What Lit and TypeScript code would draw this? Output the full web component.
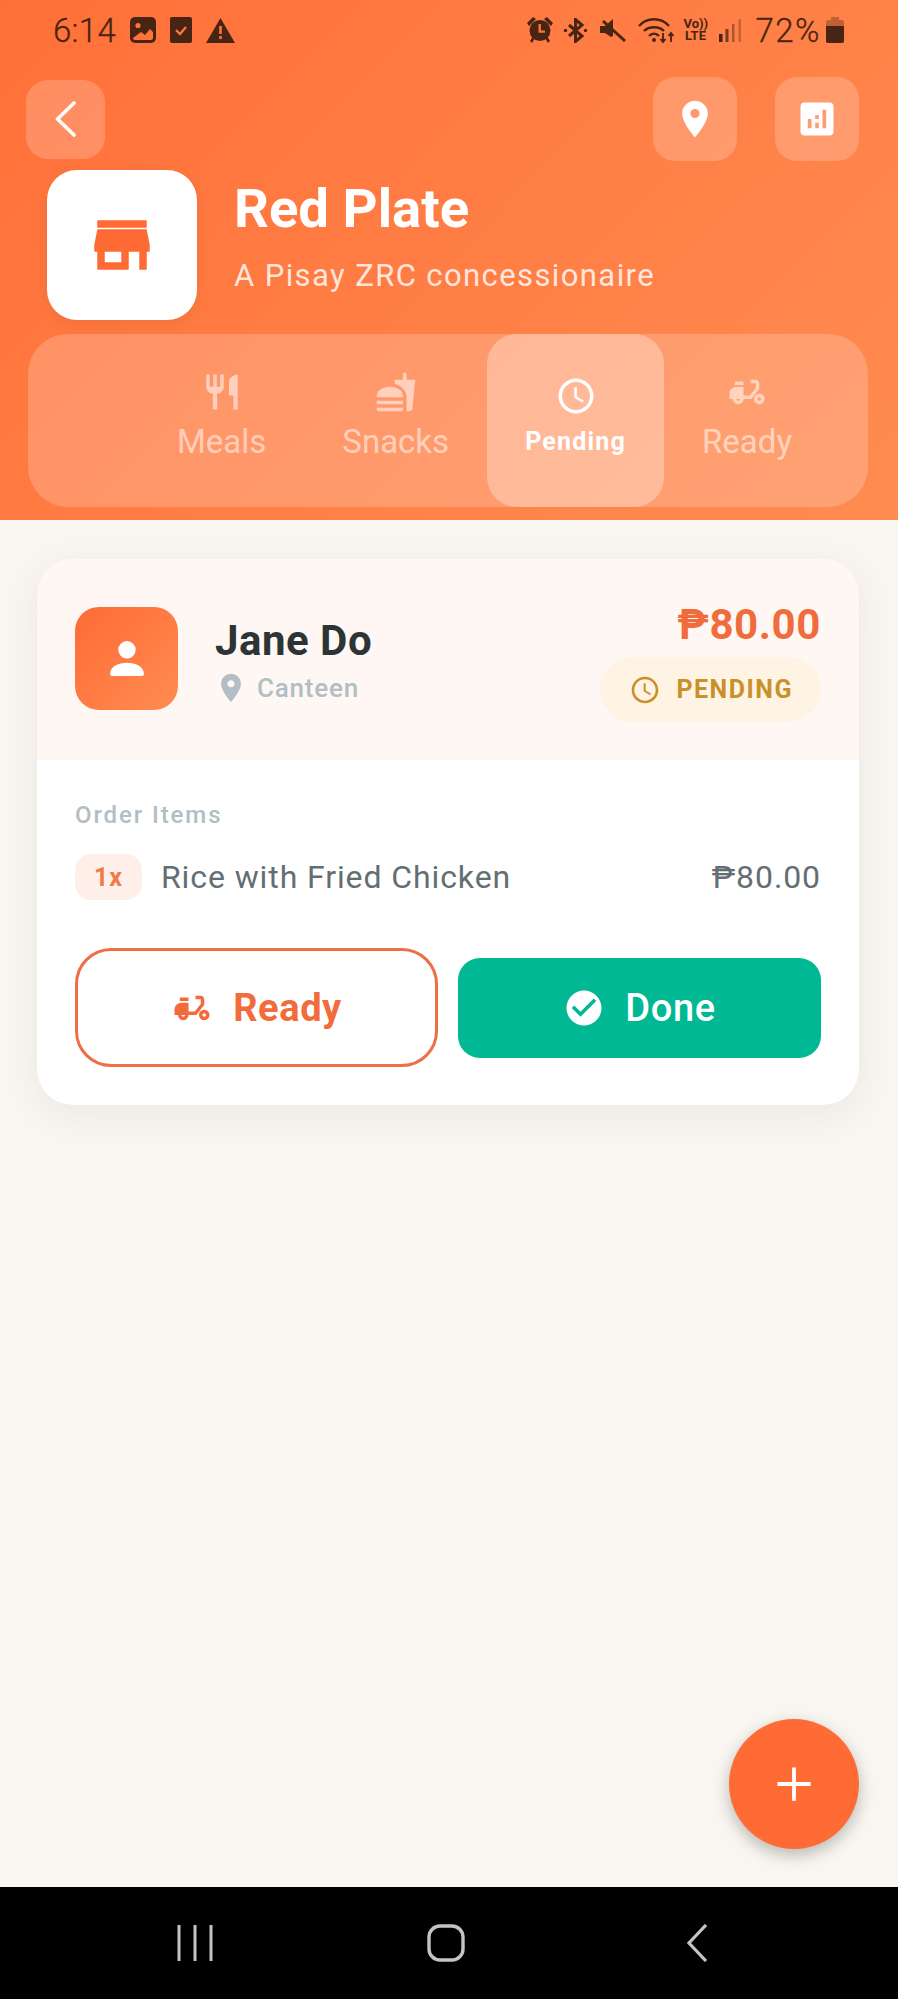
import { LitElement, css, html, svg } from "lit";
import { customElement } from "lit/decorators.js";

const P = {
  back: svg`<path d="M26 2 9.500 18 26 34" fill="none" stroke="currentColor" stroke-width="3.600" stroke-linecap="round" stroke-linejoin="round" transform="scale(.6667)"/>`,
  pin: svg`<path fill-rule="evenodd" d="M12 2C8.130 2 5 5.130 5 9c0 5.250 7 13 7 13s7-7.750 7-13c0-3.870-3.130-7-7-7zm0 9.500c-1.380 0-2.500-1.120-2.500-2.500s1.120-2.500 2.500-2.500 2.500 1.120 2.500 2.500-1.120 2.500-2.500 2.500z"/>`,
  chart: svg`<path d="M19 3H5c-1.100 0-2 .9-2 2v14c0 1.100.9 2 2 2h14c1.100 0 2-.9 2-2V5c0-1.100-.9-2-2-2zM9 17H7v-5h2v5zm4 0h-2v-3h2v3zm0-5h-2v-2h2v2zm4 5h-2V7h2v10z"/>`,
  store: svg`<path d="M20 4H4v2h16V4zm1 10v-2l-1-5H4l-1 5v2h1v6h10v-6h4v6h2v-6h1zm-9 4H6v-4h6v4z" stroke="currentColor" stroke-width=".5" stroke-linejoin="round"/>`,
  meals: svg`<path d="M11 9H9V2H7v7H5V2H3v7c0 2.120 1.660 3.840 3.750 3.970V22h2.500v-9.030C11.340 12.840 13 11.120 13 9V2h-2v7zm5-3v8h2.500v8H21V2c-2.760 0-5 2.240-5 4z"/>`,
  snacks: svg`<path d="M18.060 22.990h1.660c.84 0 1.530-.64 1.630-1.460L23 5.050h-5V1h-1.970v4.050h-4.970l.3 2.340c1.710.47 3.310 1.320 4.270 2.260 1.440 1.420 2.430 2.890 2.430 5.290v8.050zM1 21.990V21h15.030v.99c0 .55-.45 1-1.010 1H2.010c-.56 0-1.010-.45-1.010-1zm15.030-7c.5-4-3.750-6-7.500-6s-8 2-7.500 6h15zM1.020 17h15v2h-15z"/>`,
  clock: svg`<path d="M11.990 2C6.470 2 2 6.480 2 12s4.470 10 9.990 10C17.520 22 22 17.520 22 12S17.520 2 11.990 2zM12 20c-4.420 0-8-3.580-8-8s3.580-8 8-8 8 3.580 8 8-3.580 8-8 8z"/><path d="M12.500 7H11v6l4.800 2.900.7-1.200-4-2.400z"/>`,
  scooter: svg`<path d="M19 7c0-1.100-.9-2-2-2h-3v2h3v2.650L13.520 14H10V9H6c-2.210 0-4 1.790-4 4v3h2c0 1.660 1.340 3 3 3s3-1.340 3-3h4.480L19 10.350V7zM7 17c-.55 0-1-.45-1-1h2c0 .55-.45 1-1 1z"/><path d="M5 6h5v2H5z"/><path d="M19 13c-1.660 0-3 1.340-3 3s1.340 3 3 3 3-1.340 3-3-1.340-3-3-3zm0 4c-.55 0-1-.45-1-1s.45-1 1-1 1 .45 1 1-.45 1-1 1z"/>`,
  person: svg`<circle cx="12" cy="8.200" r="3.600"/><path d="M5 18.200c0-3.200 3.600-4.700 7-4.700s7 1.500 7 4.700c0 .5-.3.8-.8.8H5.800c-.5 0-.8-.3-.8-.8z"/>`,
  check: svg`<path d="M12 2C6.480 2 2 6.480 2 12s4.480 10 10 10 10-4.480 10-10S17.520 2 12 2zm-2 15l-5-5 1.410-1.410L10 14.170l7.590-7.590L19 8l-9 9z"/>`,
  plus: svg`<path d="M12 2.500v19M2.500 12h19" fill="none" stroke="currentColor" stroke-width="2.200"/>`,
};

const ic = (p: unknown, cls: string) =>
  html`<svg class=${cls} viewBox="0 0 24 24" fill="currentColor">${p}</svg>`;

const TABS = [
  { label: "Meals", icon: P.meals },
  { label: "Snacks", icon: P.snacks },
  { label: "Pending", icon: P.clock, active: true },
  { label: "Ready", icon: P.scooter },
];

@customElement("app-root")
export class AppRoot extends LitElement {
  static styles = css`
    :host {
      display: flex;
      flex-direction: column;
      position: relative;
      width: 898px;
      height: 1999px;
      overflow: hidden;
      background: #f9f6f1;
      font-family: Roboto, "Liberation Sans", sans-serif;
    }
    svg {
      display: block;
      flex: none;
    }

    .header {
      height: 520px;
      flex: none;
      box-sizing: border-box;
      background: linear-gradient(135deg, #ff7038, #ff8c52);
      display: flex;
      flex-direction: column;
    }

    .status {
      height: 60px;
      flex: none;
      display: flex;
      align-items: center;
      padding: 0 54px 0 53px;
      color: #472413;
    }
    .time,
    .pct {
      font-size: 33px;
      font-weight: 300;
      letter-spacing: 0.3px;
      -webkit-text-stroke: 0.3px #472413;
    }
    .pct {
      letter-spacing: 1.5px;
      margin-left: 13px;
    }
    .sleft {
      display: flex;
      align-items: center;
      margin-right: auto;
    }
    .sright {
      display: flex;
      align-items: center;
    }
    .sleft svg {
      margin-left: 14px;
    }
    .s-alarm,
    .s-mute,
    .s-signal,
    .s-wifi {
      margin-left: 12px;
    }
    .s-alarm {
      margin-left: 0;
    }
    .s-bt {
      margin-left: 10px;
    }
    .s-batt {
      margin-left: 5px;
    }
    .lte {
      width: 24px;
      margin-left: 8px;
      font-size: 13px;
      line-height: 12px;
      font-weight: 700;
      text-align: center;
    }

    .topbar {
      display: flex;
      align-items: center;
      height: 84px;
      margin-top: 17px;
      padding: 0 39px 0 26px;
      gap: 38px;
    }
    .iconbtn {
      width: 84px;
      height: 84px;
      border-radius: 22px;
      background: rgba(255, 255, 255, 0.2);
      display: flex;
      align-items: center;
      justify-content: center;
      color: #fff;
    }
    .iconbtn.back {
      width: 79px;
      height: 79px;
      margin-right: auto;
    }
    .i-back {
      width: 36px;
      height: 36px;
    }
    .i-top {
      width: 44px;
      height: 44px;
    }

    .brand {
      display: flex;
      align-items: flex-start;
      gap: 37px;
      margin: 9px 0 14px 47px;
    }
    .logo {
      width: 150px;
      height: 150px;
      border-radius: 30px;
      background: #fff;
      color: #ff6b35;
      display: flex;
      align-items: center;
      justify-content: center;
      box-shadow: 0 4px 16px rgba(0, 0, 0, 0.06);
    }
    .i-store {
      width: 72px;
      height: 72px;
    }
    .brand-text {
      margin-top: 7px;
    }
    .brand h1 {
      margin: 0 0 19px;
      font-size: 54.500px;
      line-height: 62px;
      font-weight: 700;
      color: #fff;
    }
    .brand p {
      margin: 0;
      font-size: 31px;
      line-height: 36px;
      letter-spacing: 1.4px;
      color: rgba(255, 255, 255, 0.82);
    }

    .tabs {
      margin: 0 30px 0 28px;
      height: 173px;
      border-radius: 40px;
      background: rgba(255, 255, 255, 0.2);
      display: flex;
      justify-content: flex-end;
      padding-right: 38px;
    }
    .tab {
      padding: 0 38px 10px;
      display: flex;
      flex-direction: column;
      align-items: center;
      justify-content: center;
      gap: 10px;
      font-size: 33px;
      line-height: 38px;
      color: rgba(255, 255, 255, 0.55);
    }
    .tab.on {
      background: rgba(255, 255, 255, 0.3);
      border-radius: 30px;
      color: #fff;
      font-size: 25px;
      line-height: 29px;
      font-weight: 700;
      letter-spacing: 1.200px;
    }
    .i-tab {
      width: 42px;
      height: 42px;
    }

    .content {
      flex: 1;
      padding: 39px 39px 0 37px;
    }
    .card {
      border-radius: 36px;
      background: #fff;
      overflow: hidden;
      box-shadow: 0 10px 40px rgba(0, 0, 0, 0.06);
    }
    .card-head {
      height: 201px;
      box-sizing: border-box;
      background: #fff7f3;
      display: flex;
      align-items: center;
      padding: 0 38px;
    }
    .avatar {
      width: 103px;
      height: 103px;
      border-radius: 24px;
      background: linear-gradient(135deg, #ff6b35, #ff8c52);
      color: #fff;
      display: flex;
      align-items: center;
      justify-content: center;
      margin: -2px 37px 0 0;
    }
    .i-person {
      width: 58px;
      height: 58px;
    }
    .who {
      flex: 1;
      margin-top: 2px;
    }
    .name {
      font-size: 42px;
      line-height: 48px;
      font-weight: 700;
      color: #2d3436;
      letter-spacing: 0.5px;
    }
    .place {
      display: flex;
      align-items: center;
      gap: 9px;
      margin-top: 6px;
      margin-left: -1px;
      font-size: 26px;
      line-height: 32px;
      font-weight: 500;
      letter-spacing: 0.8px;
      color: #b2bec3;
    }
    .i-pin {
      width: 34px;
      height: 34px;
    }
    .side {
      display: flex;
      flex-direction: column;
      align-items: flex-end;
      gap: 8px;
      margin-top: 4px;
    }
    .price {
      font-size: 42px;
      line-height: 48px;
      font-weight: 700;
      letter-spacing: 0.6px;
      color: #f26b3a;
    }
    .badge {
      height: 65px;
      box-sizing: border-box;
      border-radius: 33px;
      background: #fff3e3;
      color: #c8912a;
      display: flex;
      align-items: center;
      gap: 15px;
      padding: 0 28px 0 29px;
      font-size: 25px;
      font-weight: 700;
      letter-spacing: 1.500px;
    }
    .i-badge {
      width: 32px;
      height: 32px;
    }

    .card-body {
      padding: 41px 38px 38px;
    }
    .label {
      font-size: 24px;
      line-height: 28px;
      font-weight: 500;
      letter-spacing: 1.900px;
      color: #b2bec3;
    }
    .row {
      display: flex;
      align-items: center;
      margin-top: 25px;
      font-size: 32px;
      letter-spacing: 0.9px;
      color: #636e72;
    }
    .qty {
      width: 67px;
      height: 46px;
      border-radius: 16px;
      background: #ffefe9;
      color: #f07a4a;
      display: flex;
      align-items: center;
      justify-content: center;
      font-size: 25px;
      font-weight: 700;
      margin-right: 19px;
    }
    .row .item {
      flex: 1;
    }
    .actions {
      display: grid;
      grid-template-columns: 1fr 1fr;
      align-items: center;
      gap: 20px;
      margin-top: 48px;
    }
    .btn {
      display: flex;
      align-items: center;
      justify-content: center;
      gap: 20px;
      box-sizing: border-box;
      font-size: 38px;
      font-weight: 700;
      letter-spacing: 0.6px;
    }
    .btn.ready {
      height: 119px;
      border: 3.500px solid #ee6e45;
      border-radius: 36px;
      color: #f26b3a;
      background: #fff;
    }
    .btn.done {
      height: 100px;
      border-radius: 22px;
      background: #00b894;
      color: #fff;
      font-weight: 500;
    }
    .i-btn {
      width: 42px;
      height: 42px;
    }

    .fab {
      position: absolute;
      left: 729px;
      top: 1719px;
      width: 130px;
      height: 130px;
      border-radius: 50%;
      background: #ff6b35;
      color: #fff;
      display: flex;
      align-items: center;
      justify-content: center;
      box-shadow: 0 6px 16px rgba(0, 0, 0, 0.25);
    }
    .i-plus {
      width: 42px;
      height: 42px;
    }

    .nav {
      height: 112px;
      flex: none;
      box-sizing: border-box;
      background: #000;
      color: #c4c4c4;
      display: grid;
      grid-template-columns: repeat(3, 251px);
      padding-left: 69.5px;
      align-items: center;
      justify-items: center;
    }
    .nav .recent {
      width: 36px;
      height: 36px;
    }
    .nav .home {
      width: 38px;
      height: 38px;
    }
    .nav .prev {
      width: 24px;
      height: 38px;
    }
  `;

  private statusBar() {
    return html`<div class="status">
      <div class="sleft">
        <span class="time">6:14</span>
        <svg width="26" height="26" viewBox="0 0 26 26">
          <rect width="26" height="26" rx="5" fill="#472413" />
          <circle cx="8" cy="8.500" r="2.600" fill="#ff7339" />
          <path d="M3 21c0 1 1 2 2 2h16c1 0 2-1 2-2v-6l-3-3-5 6-4-3-8 6z" fill="#ff7339" />
        </svg>
        <svg width="22" height="26" viewBox="0 0 22 26">
          <path d="M2 0h18a2 2 0 0 1 2 2v22a2 2 0 0 1-2 2H2a2 2 0 0 1-2-2V2a2 2 0 0 1 2-2z" fill="#472413" />
          <path d="M6 13l4 4 6-7" fill="none" stroke="#ff7339" stroke-width="2.400" />
        </svg>
        <svg width="29" height="25" viewBox="0 0 29 25">
          <path d="M14.500 0 29 25H0z" fill="#472413" />
          <path d="M13.200 8h2.600v8h-2.600zM13.200 18h2.600v3h-2.600z" fill="#ff7339" />
        </svg>
      </div>
      <div class="sright">
        <svg class="s-alarm" width="26" height="26" viewBox="0 0 26 26" fill="#472413">
          <circle cx="13" cy="13.500" r="10.500" />
          <path d="M0 6l6-6 3 2-7 7zM26 6l-6-6-3 2 7 7zM3 24l3-5 2 2-3 5zM23 24l-3-5-2 2 3 5z" />
          <path d="M11.500 7h2.400v6.500h4.100v2.300h-6.500z" fill="#ff7339" />
        </svg>
        <svg class="s-bt" width="25" height="25" viewBox="0 0 25 25" fill="none" stroke="#472413" stroke-width="3">
          <path d="M6 7l13 11-6.500 5.500v-22L19 7 6 18" />
          <circle cx="2.500" cy="12.500" r="1.700" fill="#472413" stroke="none" />
          <circle cx="22.500" cy="12.500" r="1.700" fill="#472413" stroke="none" />
        </svg>
        <svg class="s-mute" width="26" height="25" viewBox="0 0 26 25">
          <path d="M0 8h5l8-7v17l-2 1-6-4H0z" fill="#472413" />
          <path d="M3 3l22 20" stroke="#472413" stroke-width="3" />
        </svg>
        <svg class="s-wifi" width="37" height="27" viewBox="0 0 37 27" fill="none" stroke="#472413" stroke-width="2.400">
          <path d="M1 9c8-9 22-9 30 0M6 14c5-5 15-5 20 0M11 19c3-3 7-3 10 0" />
          <circle cx="16" cy="23" r="2" fill="#472413" stroke="none" />
          <path d="M25 16v9M22.500 22l2.500 3 2.500-3M33 25v-9M30.500 19l2.500-3 2.500 3" stroke-width="1.800" />
        </svg>
        <div class="lte">Vo))<br />LTE</div>
        <svg class="s-signal" width="23" height="26" viewBox="0 0 23 26" fill="#472413">
          <rect y="17" width="3.500" height="8" />
          <rect x="6.500" y="12" width="3" height="13" opacity=".75" />
          <rect x="13" y="7" width="2.500" height="18" opacity=".45" />
          <rect x="19.500" y="2" width="2.500" height="23" opacity=".3" />
        </svg>
        <span class="pct">72%</span>
        <svg class="s-batt" width="18" height="26" viewBox="0 0 18 26">
          <path d="M5 0h8v3h3a2 2 0 0 1 2 2v19a2 2 0 0 1-2 2H2a2 2 0 0 1-2-2V5a2 2 0 0 1 2-2h3z" fill="#472413" opacity=".35" />
          <path d="M0 9h18v15a2 2 0 0 1-2 2H2a2 2 0 0 1-2-2z" fill="#472413" />
        </svg>
      </div>
    </div>`;
  }

  render() {
    return html`
      <div class="header">
        ${this.statusBar()}
        <div class="topbar">
          <div class="iconbtn back">${ic(P.back, "i-back")}</div>
          <div class="iconbtn">${ic(P.pin, "i-top")}</div>
          <div class="iconbtn">${ic(P.chart, "i-top")}</div>
        </div>
        <div class="brand">
          <div class="logo">${ic(P.store, "i-store")}</div>
          <div class="brand-text">
            <h1>Red Plate</h1>
            <p>A Pisay ZRC concessionaire</p>
          </div>
        </div>
        <div class="tabs">
          ${TABS.map(
            (t) => html`<div class="tab ${t.active ? "on" : ""}">
              ${ic(t.icon, "i-tab")}<span>${t.label}</span>
            </div>`,
          )}
        </div>
      </div>

      <div class="content">
        <div class="card">
          <div class="card-head">
            <div class="avatar">${ic(P.person, "i-person")}</div>
            <div class="who">
              <div class="name">Jane Do</div>
              <div class="place">${ic(P.pin, "i-pin")}<span>Canteen</span></div>
            </div>
            <div class="side">
              <div class="price">₱80.00</div>
              <div class="badge">${ic(P.clock, "i-badge")}<span>PENDING</span></div>
            </div>
          </div>
          <div class="card-body">
            <div class="label">Order Items</div>
            <div class="row">
              <span class="qty">1x</span>
              <span class="item">Rice with Fried Chicken</span>
              <span>₱80.00</span>
            </div>
            <div class="actions">
              <div class="btn ready">${ic(P.scooter, "i-btn")}<span>Ready</span></div>
              <div class="btn done">${ic(P.check, "i-btn")}<span>Done</span></div>
            </div>
          </div>
        </div>
      </div>

      <div class="fab">${ic(P.plus, "i-plus")}</div>

      <div class="nav">
        <svg class="recent" viewBox="0 0 36 36" fill="none" stroke="currentColor" stroke-width="3">
          <path d="M2 0v36M18 0v36M34 0v36" />
        </svg>
        <svg class="home" viewBox="0 0 38 38" fill="none" stroke="currentColor" stroke-width="3.400">
          <rect x="2" y="2" width="34" height="34" rx="11" />
        </svg>
        <svg class="prev" viewBox="0 0 24 38" fill="none" stroke="currentColor" stroke-width="3.200">
          <path d="M21 1 4 19l17 18" />
        </svg>
      </div>
    `;
  }
}
